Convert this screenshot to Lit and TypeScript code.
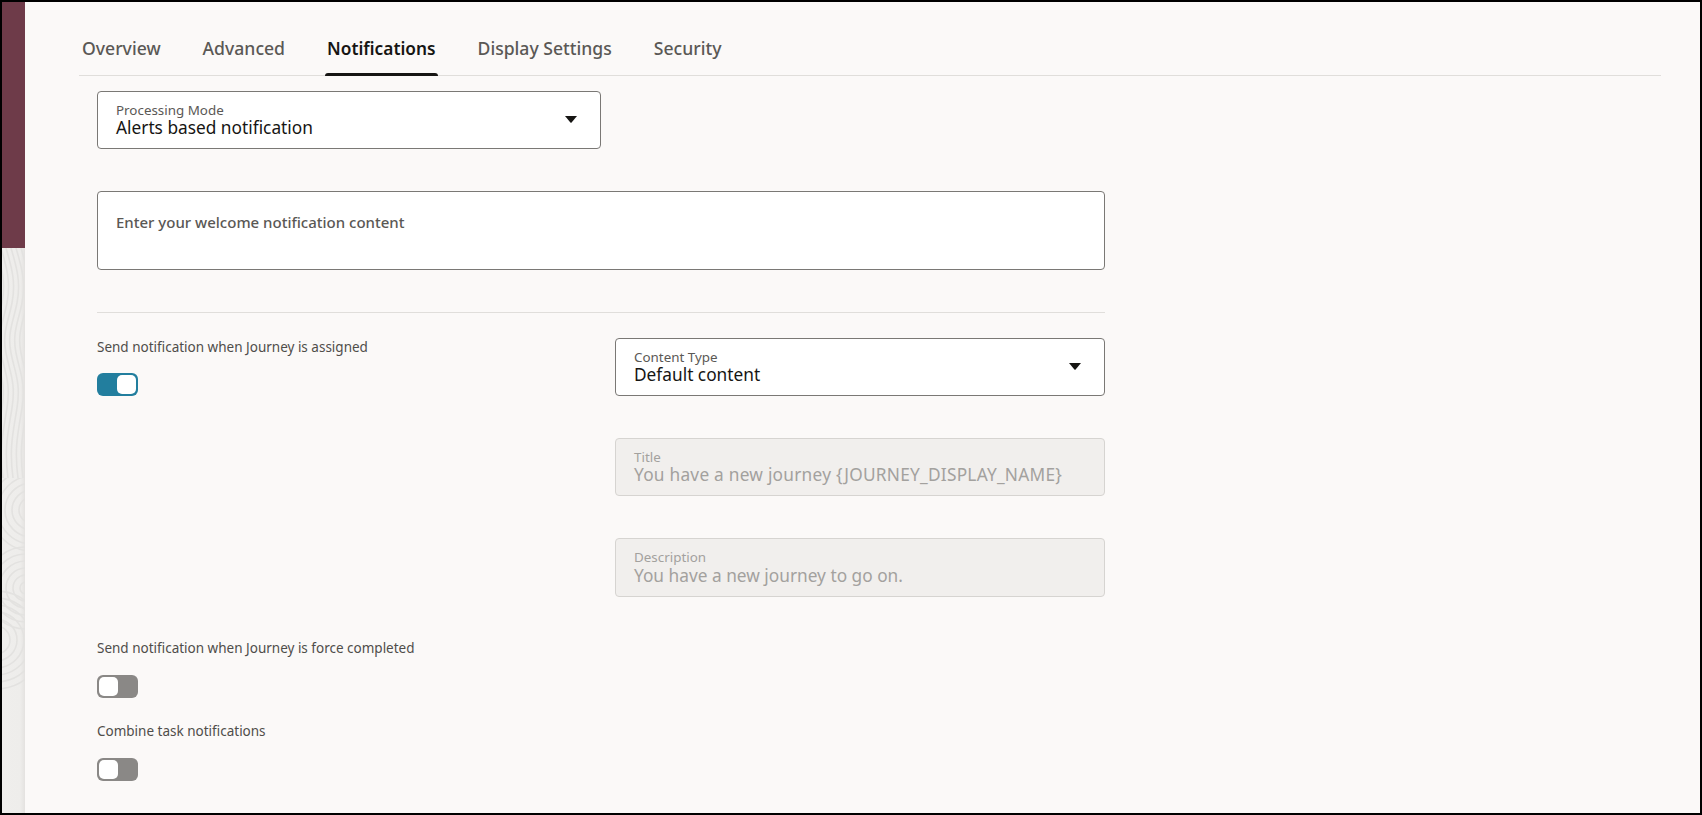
import {LitElement, html, css, svg} from 'lit';
import {customElement} from 'lit/decorators.js';

const TABS = ['Overview', 'Advanced', 'Notifications', 'Display Settings', 'Security'];

@customElement('app-root')
export class AppRoot extends LitElement {
    static override styles = css`
        :host {
            display: block;
            height: 815px;
            font-family: 'Noto Sans', sans-serif;
            color: #161513;
        }

        .frame {
            display: flex;
            height: 815px;
            box-sizing: border-box;
            border: 2px solid #000;
            background: #fbf9f8;
            overflow: hidden;
        }

        .rail {
            width: 23px;
            flex: none;
            display: flex;
            flex-direction: column;
        }

        .rail-top {
            height: 246px;
            background: #6e3b49;
        }

        .rail-art {
            flex: 1;
            background: linear-gradient(to right, #efeeec 0, #eeedeb 18px, #e4e2e0 23px);
            min-height: 0;
        }

        .rail-art svg {
            display: block;
        }

        .main {
            flex: 1;
            min-width: 0;
            padding-left: 54px;
            padding-right: 39px;
        }

        .tabs {
            display: flex;
            height: 74px;
            box-sizing: border-box;
            padding-left: 1px;
            border-bottom: 1px solid #e0dedb;
        }

        .tab {
            position: relative;
            padding: 34px 2px 0;
            margin-right: 38px;
            font-size: 17.6px;
            line-height: 24px;
            font-weight: 500;
            color: #5a5855;
        }

        .tab.active {
            padding-top: 35px;
            color: #161513;
            font-size: 17.3px;
            font-weight: 600;
        }

        .tab.active::after {
            content: '';
            position: absolute;
            left: 0;
            right: 0;
            bottom: -1px;
            height: 3px;
            background: #161513;
            border-radius: 3px 3px 0 0;
        }

        .form {
            padding: 15px 0 0 18px;
            width: 1008px;
        }

        .field {
            box-sizing: border-box;
            height: 58px;
            border: 1px solid #7a7875;
            border-radius: 4px;
            background: #fff;
            padding: 10px 18px 0;
            position: relative;
        }

        .field.mode {
            width: 504px;
        }

        .field.tall {
            height: 59px;
        }

        .field.tall .value {
            margin-top: 1px;
        }

        .field .label {
            font-size: 13.4px;
            line-height: 16px;
            color: #5a5855;
        }

        .field .value {
            font-size: 17.3px;
            line-height: 20px;
            color: #161513;
        }

        .field .value.wide {
            letter-spacing: 0.24px;
        }

        .field svg {
            position: absolute;
            right: 23px;
            top: 24px;
        }

        .field.off {
            background: #f1efed;
            border-color: #d6d4d1;
        }

        .field.off .label,
        .field.off .value {
            color: #a3a19e;
        }

        .area {
            box-sizing: border-box;
            height: 79px;
            margin-top: 42px;
            border: 1px solid #7a7875;
            border-radius: 4px;
            background: #fff;
            padding: 21px 18px 0;
            font-size: 15px;
            line-height: 19px;
            font-weight: 500;
            color: #5a5855;
        }

        .rule {
            height: 1px;
            background: #e0dedb;
            margin-top: 42px;
        }

        .row {
            display: grid;
            grid-template-columns: 518px 490px;
            margin-top: 25px;
        }

        .stack {
            display: flex;
            flex-direction: column;
            gap: 42px;
        }

        .caption {
            font-size: 13.5px;
            line-height: 18px;
            color: #4f4d4a;
        }

        .toggle {
            box-sizing: border-box;
            width: 41px;
            height: 23px;
            margin-top: 17px;
            border-radius: 6px;
            background: #8a8886;
            display: flex;
            align-items: center;
            padding: 0 2px;
        }

        .toggle::before {
            content: '';
            width: 19px;
            height: 19px;
            border-radius: 5px;
            background: #fff;
        }

        .toggle.on {
            background: #227e9e;
            justify-content: flex-end;
        }

        .toggle-block {
            margin-top: 42px;
        }

        .toggle-block .toggle {
            margin-top: 18px;
        }

        .toggle-block + .toggle-block {
            margin-top: 24px;
        }
    `;

    private _arrow() {
        return html`<svg width="12" height="7" viewBox="0 0 12 7"><path d="M0 0h12L6.6 6.4a.8.8 0 0 1-1.2 0z" fill="#161513"/></svg>`;
    }

    private _rail() {
        // contour lines: wavy verticals, then arcs, then nothing
        const waves = [-6, -1, 4, 9, 14, 19, 24].map(
            (x) => svg`<path d="M${x} 0c6 20 10 35 6 55s-10 30-6 50s10 30 6 55s-8 40-4 70"/>`
        );
        const arcs = [6, 13, 20, 27, 34, 41].flatMap((r) => [
            svg`<circle cx="30" cy="262" r="${r}"/>`,
            svg`<circle cx="-6" cy="392" r="${r + 8}"/>`,
            svg`<circle cx="24" cy="340" r="${r}"/>`,
        ]);
        return html`<svg width="23" height="565" fill="none" stroke="#e3e2e0" stroke-width="1.6">
            <defs>
                <clipPath id="top"><rect width="23" height="230"/></clipPath>
                <clipPath id="low"><rect y="230" width="23" height="214"/></clipPath>
            </defs>
            <g clip-path="url(#top)">${waves}</g>
            <g clip-path="url(#low)">${arcs}</g>
        </svg>`;
    }

    override render() {
        return html`
            <div class="frame">
                <div class="rail">
                    <div class="rail-top"></div>
                    <div class="rail-art">${this._rail()}</div>
                </div>
                <div class="main">
                    <div class="tabs">
                        ${TABS.map((t) => html`<div class="tab ${t === 'Notifications' ? 'active' : ''}">${t}</div>`)}
                    </div>
                    <div class="form">
                        <div class="field mode">
                            <div class="label">Processing Mode</div>
                            <div class="value">Alerts based notification</div>
                            ${this._arrow()}
                        </div>
                        <div class="area">Enter your welcome notification content</div>
                        <div class="rule"></div>
                        <div class="row">
                            <div>
                                <div class="caption">Send notification when Journey is assigned</div>
                                <div class="toggle on"></div>
                            </div>
                            <div class="stack">
                                <div class="field">
                                    <div class="label">Content Type</div>
                                    <div class="value">Default content</div>
                                    ${this._arrow()}
                                </div>
                                <div class="field off">
                                    <div class="label">Title</div>
                                    <div class="value wide">You have a new journey {JOURNEY_DISPLAY_NAME}</div>
                                </div>
                                <div class="field off tall">
                                    <div class="label">Description</div>
                                    <div class="value">You have a new journey to go on.</div>
                                </div>
                            </div>
                        </div>
                        <div class="toggle-block">
                            <div class="caption">Send notification when Journey is force completed</div>
                            <div class="toggle"></div>
                        </div>
                        <div class="toggle-block">
                            <div class="caption">Combine task notifications</div>
                            <div class="toggle"></div>
                        </div>
                    </div>
                </div>
            </div>
        `;
    }
}
